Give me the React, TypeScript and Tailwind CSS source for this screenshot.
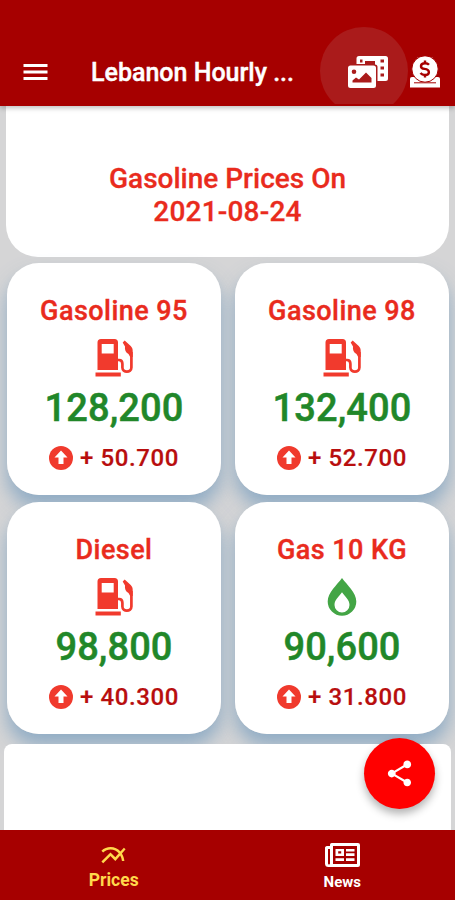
import React from "react";
import { MdMultilineChart, MdShare } from "react-icons/md";

function FuelIcon() {
  return (
    <svg className="h-10 w-10" viewBox="0 0 40 40" fill="none">
      <path fill="#f13a2d" fillRule="evenodd" d="M6 1h13.500a3.500 3.500 0 0 1 3.500 3.500V32H2.500V4.500A3.500 3.500 0 0 1 6 1Zm.7 5v9.500h12V6Z" />
      <path fill="#f13a2d" d="M.5 34.500h25.300v4H.5z" />
      <path stroke="#f13a2d" strokeWidth="2.700" d="M22 22h2c2.500 0 3.400 1.300 3.400 4v3.500c0 5.500 9 5.500 9 0V14" />
      <path fill="#f13a2d" d="m27.700 4.500 2-2 6 5.500c1.500 1.500 2 3 2 5v6h-2.500L33.500 16c-2.800-1.500-4-4.200-3.500-7.500Z" />
    </svg>
  );
}

function DropIcon() {
  return (
    <svg className="relative right-px h-10 w-10" viewBox="0 0 40 40">
      <path fill="#43a545" fillRule="evenodd" d="M20 1c5 7 14.300 14.500 14.300 23.500a14.300 14.300 0 0 1-28.600 0C5.700 15.500 15 8 20 1Zm0 14.200c-2.800 4.200-7.500 7.300-7.500 12.800a7.500 7.500 0 0 0 15 0c0-5.500-4.700-8.600-7.500-12.800Z" />
    </svg>
  );
}

function MenuIcon() {
  return (
    <svg className="ml-[23px] block h-[18px] w-[25px]" viewBox="0 0 25 18">
      <path fill="#fff" d="M.5 1h24v3H.5zM.5 7.500h24v3H.5zM.5 14h24v3H.5z" />
    </svg>
  );
}

function GalleryIcon() {
  return (
    <svg className="block h-8 w-10" viewBox="0 0 40 32">
      <path fill="#fff" fillRule="evenodd" d="M11 0h26.500A2.500 2.500 0 0 1 40 2.500v20a2.500 2.500 0 0 1-2.500 2.500H29.500V11a2.500 2.500 0 0 0-2.500-2.500V5H17v3H8.500V2.500A2.500 2.500 0 0 1 11 0Zm1 3.500v3h2.500v-3Zm20.500 0v3H36v-3Zm0 7v3H36v-3Zm0 7v3H36v-3Z" />
      <path fill="#fff" fillRule="evenodd" d="M2.500 9.500h23A2.500 2.500 0 0 1 28 12v17.500a2.500 2.500 0 0 1-2.500 2.500h-23A2.500 2.500 0 0 1 0 29.500V12a2.500 2.500 0 0 1 2.500-2.500ZM6 13.500a2.300 2.300 0 1 0 0 4.600 2.300 2.300 0 0 0 0-4.600ZM4.500 26.500h19V22L18 16.500l-7 7-3-2-3.500 3Z" />
    </svg>
  );
}

function DonateIcon() {
  return (
    <svg className="block h-8 w-8" viewBox="0 0 32 32">
      <path fill="#fff" d="M3 21h26a2 2 0 0 1 2 2v8.500H1V23a2 2 0 0 1 2-2Z" />
      <path stroke="#a60000" strokeWidth="1" d="M5 26.800h22" />
      <circle cx="16" cy="13" r="13.200" fill="#fff" stroke="#a60000" strokeWidth="1" />
      <path fill="none" stroke="#a60000" strokeWidth="2.400" d="M20 8.800c-1-1.200-2.200-1.600-4-1.600-5 0-5.500 5-.5 5.700 6 .8 5.500 6.100.5 6.100-2 0-3.500-.7-4.500-2M16 4.500v3M16 18.500v3" />
    </svg>
  );
}

function NewsIcon() {
  return (
    <svg className="block h-[26px] w-[35px]" viewBox="0 0 35 26">
      <path fill="#fff" fillRule="evenodd" d="M7.500 1H33a2 2 0 0 1 2 2v20a2 2 0 0 1-2 2H3.500A3.500 3.500 0 0 1 0 21.500V5.500A2 2 0 0 1 2 4h3V3a2 2 0 0 1 2.500-2ZM8 4v18h24V4ZM3 7v14.500a1 1 0 0 0 2 0V7Z" />
      <path fill="#fff" fillRule="evenodd" d="M10.500 7H19v7h-8.500Zm2.700 2.300v2.300h3V9.300ZM21 7h8.500v2.600H21Zm0 4.200h8.500V14H21Zm-10.500 5H19V19h-8.500Zm10.500 0h8.500V19H21Z" />
    </svg>
  );
}

interface PriceCardProps {
  name: string;
  price: string;
  change: string;
  gas?: boolean;
}

function PriceCard({ name, price, change, gas }: PriceCardProps) {
  return (
    <div className="relative flex h-[232px] flex-col items-center rounded-[32px] bg-white pt-[32px]">
      <div className="h-[33px] whitespace-nowrap text-[27px] leading-[33px] font-medium tracking-[0.450px] text-[#e92b1d] [-webkit-text-stroke:0.400px_#e92b1d]">{name}</div>
      <div className="mt-[10px] h-10 pl-px">{gas ? <DropIcon /> : <FuelIcon />}</div>
      <div className="mt-[8px] h-[44px] text-[38px] leading-[44px] font-medium tracking-[0.100px] text-[#218729] [-webkit-text-stroke:0.500px_#218729]">{price}</div>
      <div className="mt-[13px] flex h-[30px] items-center gap-[7px]">
        <svg className="h-6 w-6" viewBox="0 0 24 24">
          <circle cx="12" cy="12" r="12" fill="#f03a2d" />
          <path fill="#fff" d="m12 4.500 6.500 7h-4V18h-5v-6.500h-4Z" />
        </svg>
        <span className="whitespace-nowrap text-[24px] leading-[30px] font-medium tracking-[0.600px] text-[#b80e0e] [-webkit-text-stroke:0.200px_#b80e0e]">+ {change}</span>
      </div>
    </div>
  );
}

const prices: PriceCardProps[] = [
  { name: "Gasoline 95", price: "128,200", change: "50.700" },
  { name: "Gasoline 98", price: "132,400", change: "52.700" },
  { name: "Diesel", price: "98,800", change: "40.300" },
  { name: "Gas 10 KG", price: "90,600", change: "31.800", gas: true },
];

export default function App() {
  return (
    <div className="relative flex h-[900px] w-[455px] flex-col overflow-hidden bg-[#d5d5d6] font-['Roboto',sans-serif]">
      <header className="relative z-10 flex h-[106px] shrink-0 items-end bg-[#a60000] shadow-[0_2px_5px_rgba(0,0,0,0.25)]">
        <div className="absolute inset-x-0 top-0 h-[104px] overflow-hidden">
          <div className="absolute top-[27px] left-[320px] h-[88px] w-[88px] rounded-full bg-[#aa1b1b]" />
        </div>
        <div className="relative flex h-[68px] w-full items-center">
          <MenuIcon />
          <h1 className="ml-[43px] w-[257px] whitespace-nowrap pt-[2px] text-[25px] leading-[30px] font-medium text-white [-webkit-text-stroke:0.400px_white]">Lebanon Hourly ...</h1>
          <GalleryIcon />
          <div className="ml-[21px]"><DonateIcon /></div>
        </div>
      </header>

      <main className="flex h-[724px] shrink-0 flex-col overflow-hidden">
        <section className="mx-[6px] flex h-[151px] shrink-0 flex-col items-center rounded-b-[32px] bg-white pt-[56px] text-[28px] leading-[33px] font-medium text-[#e92b1d] [-webkit-text-stroke:0.300px_#e92b1d]">
          <div>Gasoline Prices On</div>
          <div className="tracking-[0.200px]">2021-08-24</div>
        </section>
        <section className="mt-[6px] grid shrink-0 grid-cols-2 gap-x-[14px] gap-y-[7px] pr-[6px] pl-[7px]">
          {prices.map((p) => (
            <div key={p.name} className="rounded-[32px] shadow-[0_12px_18px_rgba(115,155,190,0.700)]">
              <PriceCard {...p} />
            </div>
          ))}
        </section>
        <section className="relative mx-[4px] mt-[10px] flex-1 rounded-t-[8px] bg-white" />
      </main>

      <nav className="grid h-[70px] shrink-0 grid-cols-2 bg-[#a60000] pt-[11px] text-[17.500px] leading-[20px]">
        <div className="flex flex-col items-center text-[#ffd84c]">
          <MdMultilineChart className="h-[29px] w-[29px]" />
          <span className="font-bold">Prices</span>
        </div>
        <div className="flex flex-col items-center pt-px pl-[2px] text-white">
          <NewsIcon />
          <span className="mt-[4px] text-[15px] font-bold">News</span>
        </div>
      </nav>

      <button aria-label="Share" className="absolute top-[738px] left-[364px] z-20 flex h-[71px] w-[71px] items-center justify-center rounded-full bg-[#ff0000] text-white shadow-[0_5px_9px_rgba(0,0,0,0.3)]">
        <MdShare className="h-[31px] w-[31px]" />
      </button>
    </div>
  );
}
